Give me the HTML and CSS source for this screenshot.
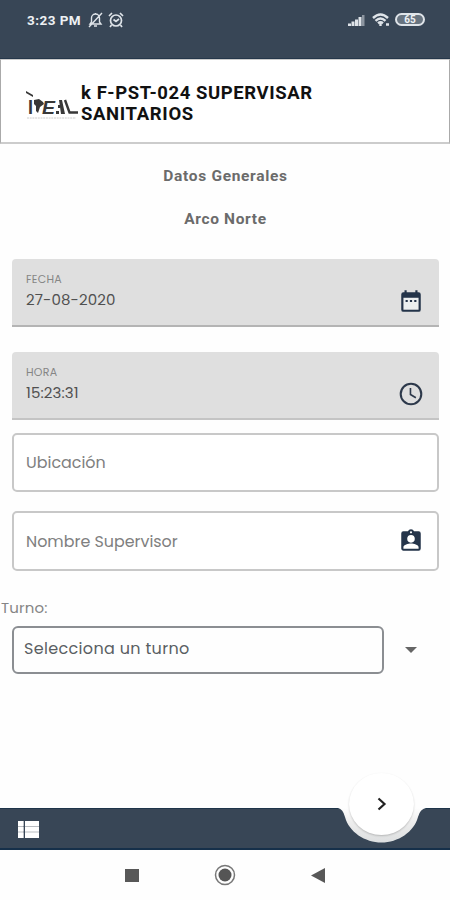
FILE: index.html
```html
<!DOCTYPE html>
<html lang="es">
<head>
<meta charset="utf-8">
<title>Supervisar sanitarios</title>
<link rel="stylesheet" href="styles.css">
</head>
<body>
<div class="status">
  <span class="time">3:23 PM</span>
  <svg class="bell" width="15" height="16" viewBox="0 0 15 16" fill="none" stroke="#dfe4e9" stroke-width="1.4"><path d="M2 12h11l-1.5-2V6a4 4 0 0 0-8 0v4zM6 14h3M7.500 2V1M1 15 14 1"/></svg>
  <svg class="alarm" width="16" height="16" viewBox="0 0 16 16" fill="none" stroke="#dfe4e9" stroke-width="1.7"><circle cx="8" cy="8.500" r="5.500"/><path d="M1 4l3-3M15 4l-3-3M5.500 7.500 8 9.500l3-2.500M3.500 13 2 15M12.500 13l1.500 2"/></svg>
  <svg class="signal" width="17" height="12" viewBox="0 0 17 12" fill="#dfe4e9"><path d="M0 9.500h3V12H0zM3.500 7.500h3V12h-3zM7 5.500h3V12H7zM10.500 3h3v9h-3z"/><path d="M14 1h2.500v11H14z" opacity=".5"/></svg>
  <svg class="wifi" width="18" height="14" viewBox="0 0 18 14" fill="none" stroke="#dfe4e9" stroke-width="2.400"><path d="M1 5q7.500-7 15 0M3.500 7.800q5-4.500 10 0M6 10.300q2.500-2 5 0"/><path d="M8.500 10v3M14 11.500h3" /></svg>
  <span class="battery">65</span>
</div>
<header class="head">
  <svg class="logo" width="54" height="32" viewBox="0 0 54 32">
    <g fill="#383838" font-family="Liberation Sans" font-weight="700" font-size="20">
      <text x="2" y="26" textLength="5" lengthAdjust="spacingAndGlyphs">I</text>
      <path d="M0 3l7 4v2L0 5zM8 12l5-1 4 3 1 2-4 3-2 6-2-2v-5l-2-2z"/>
      <text x="16" y="26" font-style="italic" font-size="19" textLength="13" lengthAdjust="spacingAndGlyphs">E</text>
      <path d="M33 12h3l3 14h-4zM32 17h2v3h-2zM30 23h3v3h-3z"/>
    </g>
    <path d="M39 12l4.500 12.500H52" fill="none" stroke="#383838" stroke-width="2.400"/>
    <path d="M1 30h49" stroke="#ccc" stroke-dasharray="2 .7"/>
  </svg>
  <h1><span class="l1">k F-PST-024 SUPERVISAR</span><br><span class="l2">SANITARIOS</span></h1>
</header>
<main>
  <h2 class="t1">Datos Generales</h2>
  <h2 class="t2">Arco Norte</h2>
  <div class="filled">
    <div><div class="label fecha">FECHA</div><div class="value date">27-08-2020</div></div>
    <svg width="26" height="26" viewBox="0 0 24 24" fill="#24344a"><path fill="#eceff0" d="M5 9h14v11H5z"/><path d="M19 4h-1V2h-2v2H8V2H6v2H5a2 2 0 0 0-2 2v14a2 2 0 0 0 2 2h14a2 2 0 0 0 2-2V6a2 2 0 0 0-2-2zm0 16H5V9h14zM7 11h2v2H7zm4 0h2v2h-2zm4 0h2v2h-2z"/></svg>
  </div>
  <div class="filled second">
    <div><div class="label hora">HORA</div><div class="value hour">15:23:31</div></div>
    <svg width="26" height="26" viewBox="0 0 24 24" fill="none" stroke="#2d394b" stroke-width="1.900"><circle cx="12" cy="12" r="9.500"/><path d="M11.500 6.500v6l5 3" stroke-width="1.500"/></svg>
  </div>
  <div class="outlined"><span class="ubi">Ubicación</span></div>
  <div class="outlined sup"><span class="nom">Nombre Supervisor</span>
    <svg width="26" height="26" viewBox="0 0 24 24"><path fill="#24344a" d="M19 3h-4.200a3 3 0 0 0-5.600 0H5a2 2 0 0 0-2 2v14c0 1.100.9 2 2 2h14a2 2 0 0 0 2-2V5a2 2 0 0 0-2-2zm-7 0a1 1 0 1 1 0 2 1 1 0 0 1 0-2zm0 3.500a3.500 3.500 0 1 1 0 7 3.500 3.500 0 0 1 0-7zm7 12.700H5v-1.400c0-2.200 4.500-3.400 7-3.400s7 1.200 7 3.400z"/></svg>
  </div>
  <div class="turno"><span>Turno:</span></div>
  <div class="row">
    <div class="select"><span>Selecciona un turno</span></div>
    <svg width="12" height="6" viewBox="0 0 12 6"><path d="M0 0h12L6 6z" fill="#666"/></svg>
  </div>
</main>
<footer>
  <div class="bar">
    <svg class="list" width="21" height="17" viewBox="0 0 21 17"><path fill="#b8bcc1" d="M0 0h5.500v17H0zM7 0h14v17H7z"/><path fill="#fff" d="M0 0h5.500v5H0zM7 0h14v5H7zM0 6h5.500v4.500H0zM7 6h14v4.500H7zM0 11.500h5.500V17H0zM7 11.500h14V17H7z"/></svg>
    <svg class="notch" width="88" height="36" viewBox="0 0 88 36"><defs><linearGradient id="shade" x1="0" y1="0" x2="0" y2="1"><stop offset="0" stop-color="#fefefe"/><stop offset=".45" stop-color="#ececec"/><stop offset="1" stop-color="#dddfe0"/></linearGradient></defs><path d="M0 0Q5 1 7 9C11 24 27 34.500 43.500 34.500S76 24 80 9Q82 1 88 0z" fill="url(#shade)"/></svg>
    <button class="fab"><svg width="10" height="14" viewBox="0 0 10 14" fill="none" stroke="#222" stroke-width="2.200"><path d="M1.500 1.500 7.500 7l-6 5.500"/></svg></button>
  </div>
  <nav>
    <svg width="14" height="13" viewBox="0 0 14 13"><path d="M0 0h14v13H0z" fill="#585858"/></svg>
    <svg width="22" height="22" viewBox="0 0 22 22"><circle cx="11" cy="11" r="9.500" fill="none" stroke="#777" stroke-width="1.500"/><circle cx="11" cy="11" r="6.500" fill="#555"/></svg>
    <svg width="14" height="15" viewBox="0 0 14 15"><path d="M0 7.500 14 0v15z" fill="#585858"/></svg>
  </nav>
</footer>
</body>
</html>
```
FILE: styles.css
```css
* { box-sizing: border-box; }
body { margin: 0; height: 900px; display: flex; flex-direction: column; background: #fefefe; font-family: Poppins, Inter, sans-serif; overflow: hidden; }
svg { display: block; flex: none; }
.status { height: 59px; background: #384656; border-bottom: 1px solid #25374a; padding: 12px 25px 0 27px; display: flex; align-items: flex-start; color: #eef1f4; }
.time { font: 700 13.5px/16px Roboto, sans-serif; letter-spacing: .45px; width: 61px; white-space: nowrap; }
.alarm { margin-left: 5px; }
.signal { margin: 2px 7px 0 auto; }
.wifi { margin: 1px 5px 0 0; }
.battery { width: 30px; height: 13px; margin-top: 1px; border: 2px solid #dfe4e9; border-radius: 7px; background: #687480; font: 700 10px/9px Roboto, sans-serif; text-align: center; }
.head { height: 85px; border: 1px solid #aaa; border-top-color: #ccc; border-bottom: 2px solid #ccc; background: #fff; display: flex; padding: 23px 0 0 25px; }
.logo { margin-top: 5px; }
h1 { margin: 0; font: 700 18.5px/21px Roboto, sans-serif; color: #111; white-space: nowrap; }
.l1 { margin-left: 1px; letter-spacing: .58px; }
.l2 { margin-left: 1px; letter-spacing: .65px; }
main { flex: 1; }
h2 { margin: 0; padding-left: 1px; font: 700 15.5px/20px Roboto, sans-serif; color: #6b6b6b; text-align: center; }
.t1 { margin-top: 22px; letter-spacing: .68px; }
.t2 { margin-top: 23px; letter-spacing: .65px; }
.filled { height: 68px; margin: 30px 11px 0 12px; padding: 12px 14px 0; background: #dfdfdf; border-bottom: 2px solid #b4b4b4; border-radius: 4px 4px 0 0; display: flex; justify-content: space-between; }
.filled svg { margin: 17px 1px 0 0; }
.filled.second { margin-top: 25px; border-color: #c4c4c4; }
.label { font-size: 11px; line-height: 16px; letter-spacing: .25px; color: #858585; }
.value { font-size: 15px; line-height: 25px; letter-spacing: .12px; color: #505050; white-space: nowrap; }
.outlined { height: 59px; margin: 13px 11px 0 12px; padding: 0 14px 0 12px; border: 2px solid #c8c8c8; border-radius: 5px; background: #fff; display: flex; align-items: center; justify-content: space-between; font-size: 15.9px; color: #808080; }
.outlined.sup { height: 60px; margin-top: 19px; padding-right: 13px; }
.turno { margin: 27px 0 0 1px; font-size: 15px; line-height: 20px; letter-spacing: .15px; color: #858585; }
.row { display: flex; align-items: center; margin: 8px 0 0 12px; }
.row svg { margin-left: 21px; }
.select { width: 372px; height: 48px; border: 2px solid #8b8e92; border-radius: 6px; padding: 0 10px 4px; display: flex; align-items: center; font-size: 16px; letter-spacing: .33px; color: #5a5e63; }
.bar { position: relative; height: 42px; background: #384656; border-top: 1px solid #1f354a; border-bottom: 2px solid #16304a; padding: 12px 0 0 18px; }
.notch { position: absolute; left: 338px; top: -1px; }
.fab { position: absolute; left: 349px; top: -36px; width: 65px; height: 62px; border: 0; padding: 0; border-radius: 50%; background: #fff; box-shadow: 0 1px 2px #0003; display: flex; align-items: center; justify-content: center; }
nav { height: 50px; padding: 0 125px; display: flex; align-items: center; justify-content: space-between; }
```
